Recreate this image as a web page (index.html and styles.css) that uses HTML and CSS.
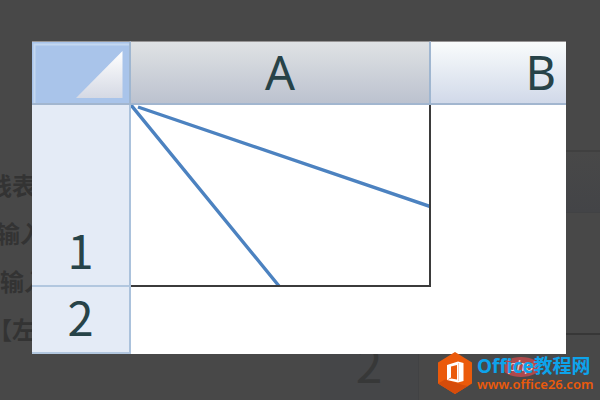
FILE: index.html
```html
<!DOCTYPE html>
<html lang="zh-CN">
<head>
<meta charset="utf-8">
<title>Office教程网</title>
<link rel="stylesheet" href="styles.css">
</head>
<body>
<div class="backdrop" aria-hidden="true">
  <div class="article">
    <p>线表</p>
    <p class="indent">输入</p>
    <p class="indent-more">输入</p>
    <p>【左</p>
  </div>
  <div class="ghost-head"></div>
  <div class="ghost-line"></div>
  <div class="ghost-row">2</div>
</div>
<main class="sheet">
  <table>
    <colgroup><col class="col-index"><col class="col-a"><col></colgroup>
    <thead>
      <tr>
        <td class="corner">
          <svg viewBox="0 0 97 61" aria-hidden="true">
            <defs><linearGradient id="fold" x1="0" y1="0" x2="0" y2="1"><stop offset="0" stop-color="#ffffff"/><stop offset="1" stop-color="#d5d9e4"/></linearGradient></defs>
            <path d="M2.500 61V2.500H97" fill="none" stroke="#c4d7f0" stroke-width="2"/>
            <path d="M90.500 9V56H44Z" fill="url(#fold)"/>
          </svg>
        </td>
        <th class="head-a" scope="col">A</th>
        <th class="head-b" scope="col">B</th>
      </tr>
    </thead>
    <tbody>
      <tr class="row-tall">
        <th scope="row">1</th>
        <td class="split">
          <svg viewBox="0 0 298 180" preserveAspectRatio="none" aria-hidden="true">
            <path d="M0 0L148 181M7 2L299 101.500" fill="none" stroke="#4c82c0" stroke-width="3.400"/>
          </svg>
        </td>
        <td></td>
      </tr>
      <tr class="row-short">
        <th scope="row">2</th>
        <td></td>
        <td></td>
      </tr>
    </tbody>
  </table>
</main>
<aside class="brand">
  <svg class="brand-logo" viewBox="0 0 36 44" aria-hidden="true">
    <path d="M18 1L35 11.500V32.500L18 43L1 32.500V11.500Z" fill="#eb5a0b"/>
    <path d="M1 32.500L8 28.500L26 34L31 35L18 43Z" fill="#d64c0b"/>
    <path fill-rule="evenodd" d="M10 14L21 10.500L26.500 12V30L21 31.500L10 29L14 27.500L20 28.500V14L14 15.500V26.500L10 29Z" fill="#fff"/>
    <path d="M21.500 12V30" stroke="#f5b99b" stroke-width="0.700"/>
  </svg>
  <div class="brand-text">
    <span class="stamp">php</span>
    <span class="brand-name">Office教程网</span>
    <span class="brand-url">www.office26.com</span>
  </div>
</aside>
</body>
</html>
```
FILE: styles.css
```css
* {
  box-sizing: border-box;
}

body {
  margin: 0;
  min-height: 100vh;
  padding: 41px 34px 0 32px;
  position: relative;
  overflow: hidden;
  background: #484848;
  font-family: "Noto Sans", "Noto Sans CJK SC", sans-serif;
}

.backdrop {
  position: absolute;
  inset: 0;
  color: #333;
}

.article {
  position: absolute;
  left: -12px;
  top: 161px;
  font: bold 24px/48px "Noto Sans CJK SC", sans-serif;
}

.article p {
  margin: 0;
}

.article .indent {
  padding-left: 8px;
}

.article .indent-more {
  padding-left: 12px;
}

.ghost-head {
  position: absolute;
  right: 0;
  top: 150px;
  width: 180px;
  height: 63px;
  border-top: 2px solid #404040;
  border-bottom: 1px solid #414244;
  background: linear-gradient(#484848, #434447);
}

.ghost-line {
  position: absolute;
  right: 0;
  top: 333px;
  width: 180px;
  height: 2px;
  background: #373737;
}

.ghost-row {
  position: absolute;
  left: 320px;
  bottom: 0;
  width: 99px;
  height: 60px;
  border-right: 1px solid #414244;
  background: #454648;
  color: #373838;
  font: 48px/44px "Noto Sans CJK SC", sans-serif;
  text-align: center;
}

.sheet {
  position: relative;
  overflow: hidden;
  background: #fff;
}

table {
  width: 100%;
  table-layout: fixed;
  border-spacing: 0;
}

.col-index {
  width: 99px;
}

.col-a {
  width: 300px;
}

td,
th {
  padding: 0;
}

th {
  color: #274348;
  font-size: 47px;
  font-weight: 400;
  line-height: 61px;
}

thead td,
thead th {
  height: 64px;
  border-top: 1px solid #969494;
  border-right: 2px solid #9fb6d0;
  border-bottom: 2px solid #a2b6cf;
}

.corner {
  background: #a9c4ea;
}

.corner svg,
.split svg {
  display: block;
  width: 100%;
}

.corner svg {
  height: 61px;
}

.head-a {
  background: linear-gradient(#dfe2e4, #bcc2cf);
}

thead .head-b {
  padding-right: 10px;
  border-right: 0;
  background: linear-gradient(#f9fcfc, #d1d9e9);
  text-align: right;
}

tbody th {
  padding-bottom: 11px;
  border-right: 2px solid #abc2dc;
  border-bottom: 2px solid #b2c7df;
  background: #e4ebf6;
  font-family: "Noto Sans CJK SC", sans-serif;
  line-height: 50px;
  vertical-align: bottom;
}

.row-tall > * {
  height: 182px;
}

.row-short > * {
  height: 67px;
}

.split {
  border-right: 2px solid #3b3b3b;
  border-bottom: 2px solid #3b3b3b;
}

.split svg {
  height: 180px;
}

.brand {
  position: absolute;
  left: 437px;
  bottom: 5px;
  display: flex;
  gap: 4px;
}

.brand-logo {
  width: 36px;
  height: 44px;
}

.brand-text {
  position: relative;
  display: flex;
  flex-direction: column;
  padding-top: 4px;
  white-space: nowrap;
}

.brand-name {
  position: relative;
  color: #0da3eb;
  font: bold 19px/22px "Noto Sans", "Noto Sans CJK SC", sans-serif;
}

.brand-url {
  position: relative;
  color: #eb5a0b;
  font: 600 13px/14px "Noto Sans", sans-serif;
}

.stamp {
  position: absolute;
  left: 25px;
  top: 6px;
  width: 38px;
  height: 20px;
  border-radius: 50%;
  background: #ae4a4c;
  color: #e6d4d4;
  font: italic 15px/18px "Liberation Sans", sans-serif;
  text-align: center;
}
```
